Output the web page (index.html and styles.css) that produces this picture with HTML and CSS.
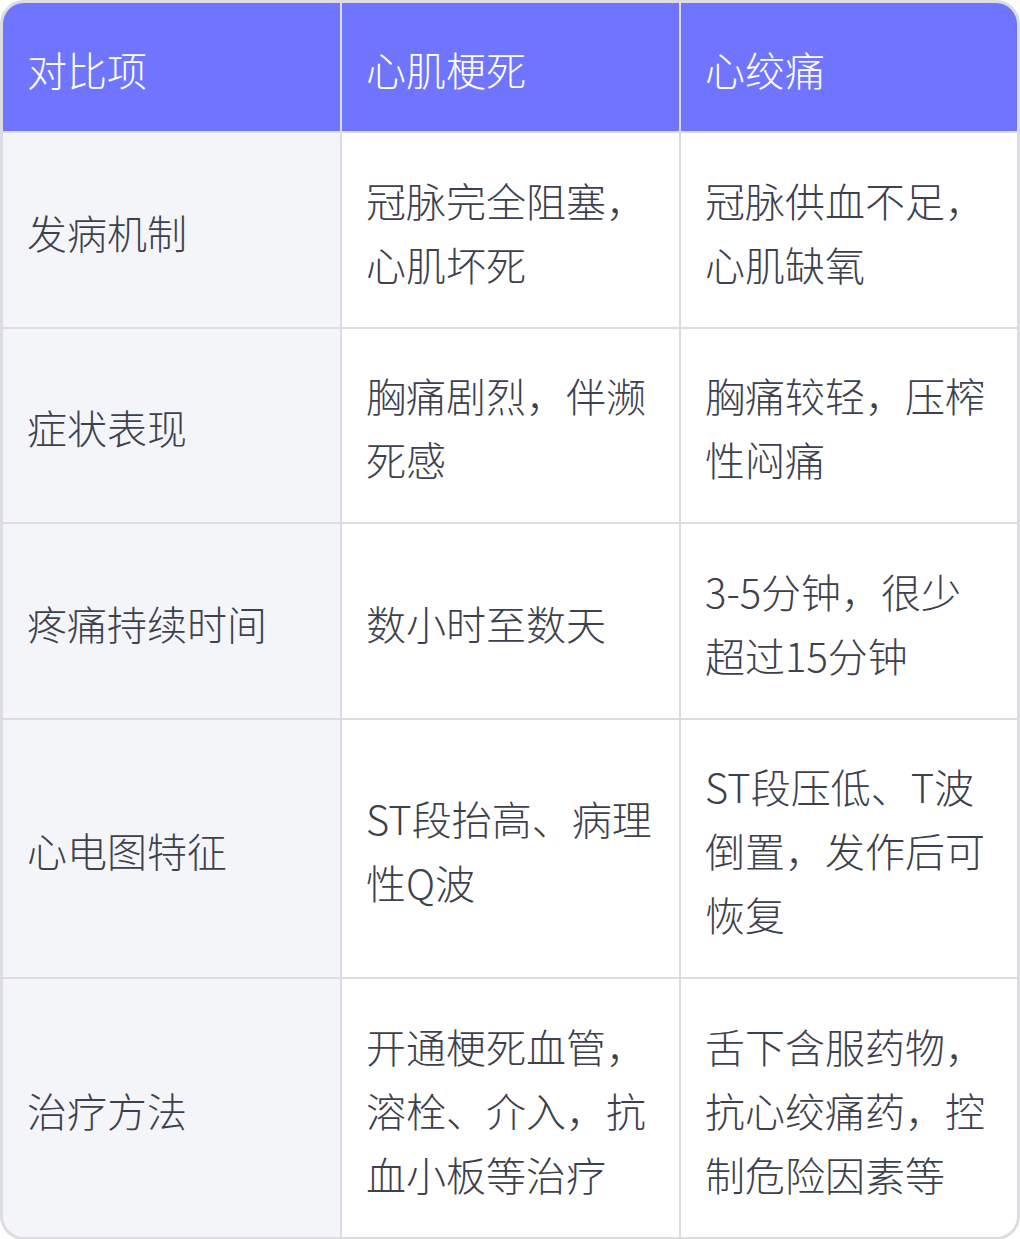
FILE: index.html
```html
<!DOCTYPE html>
<html lang="zh-CN">
<head>
<meta charset="utf-8">
<title>心肌梗死与心绞痛对比</title>
<link rel="stylesheet" href="styles.css">
</head>
<body>
<div class="compare">
  <div class="cell head">对比项</div>
  <div class="cell head">心肌梗死</div>
  <div class="cell head">心绞痛</div>

  <div class="cell label">发病机制</div>
  <div class="cell">冠脉完全阻塞，心肌坏死</div>
  <div class="cell">冠脉供血不足，心肌缺氧</div>

  <div class="cell label">症状表现</div>
  <div class="cell">胸痛剧烈，伴濒死感</div>
  <div class="cell">胸痛较轻，压榨性闷痛</div>

  <div class="cell label">疼痛持续时间</div>
  <div class="cell">数小时至数天</div>
  <div class="cell">3-5分钟，很少超过15分钟</div>

  <div class="cell label">心电图特征</div>
  <div class="cell">ST段抬高、病理性Q波</div>
  <div class="cell">ST段压低、T波倒置，发作后可恢复</div>

  <div class="cell label">治疗方法</div>
  <div class="cell">开通梗死血管，溶栓、介入，抗血小板等治疗</div>
  <div class="cell">舌下含服药物，抗心绞痛药，控制危险因素等</div>
</div>
</body>
</html>
```

FILE: styles.css
```css
html, body {
  margin: 0;
  padding: 0;
  background: #ffffff;
}

.compare {
  box-sizing: border-box;
  width: 1020px;
  display: grid;
  grid-template-columns: 337px 337px 1fr;
  gap: 2px;
  background: #dcdce2;
  border: 3px solid #dcdce2;
  border-radius: 24px;
  overflow: hidden;
  font-family: "Noto Sans CJK SC", "Noto Sans", sans-serif;
  font-size: 40px;
  font-weight: 300;
  line-height: 64px;
  color: #3d414d;
}

.cell {
  display: flex;
  align-items: center;
  padding: 34.75px 24px 30.75px 24px;
  background: #ffffff;
  word-break: break-all;
}

.head {
  padding-top: 34px;
  padding-bottom: 30px;
  background: #7075ff;
  color: #ffffff;
}

.label {
  background: #f4f5f9;
}
```
